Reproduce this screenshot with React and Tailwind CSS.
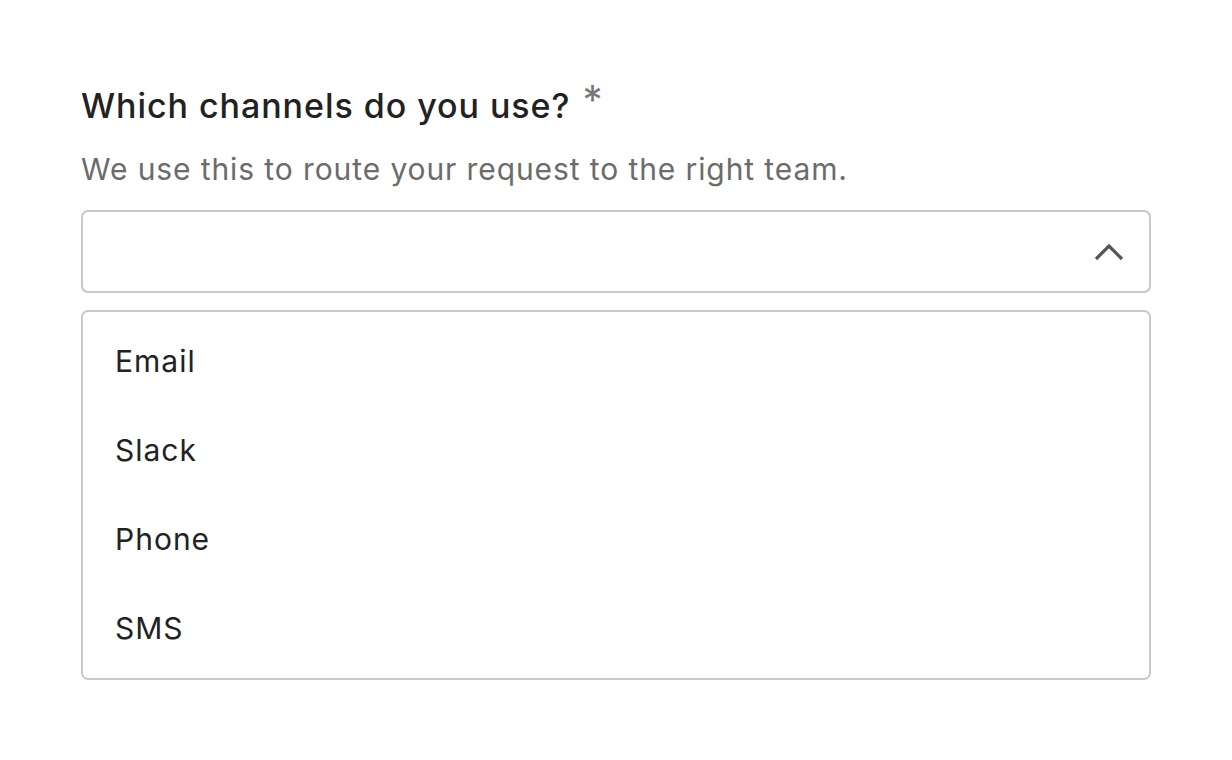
export default function App() {
  return (
    <div className="min-h-[760px] w-[1232px] bg-white" style={{ fontFamily: "Inter, 'Noto Sans', sans-serif" }}>
      <div className="pl-[81px] pr-[81px] pt-[82px]">
        <div className="flex items-start">
          <h2 className="text-[34px] leading-[48px] font-medium tracking-[0.95px] text-[#222222]">Which channels do you use?</h2>
          <span className="ml-[12px] mt-[-2px] text-[40px] leading-[40px] text-[#777777]">*</span>
        </div>
        <p className="mt-[19px] text-[30px] leading-[40px] tracking-[0.9px] text-[#6b6b6b]">We use this to route your request to the right team.</p>
        <div className="mt-[21px] flex h-[83px] items-center justify-end rounded-[7px] border-2 border-[#c8c8c8] pr-[25px]">
          <svg width="30" height="18" viewBox="0 0 30 18" fill="none">
            <path d="M2 16L15 3L28 16" stroke="#555555" strokeWidth="3.2" />
          </svg>
        </div>
        <div className="mt-[17px] flex flex-col rounded-[7px] border-2 border-[#c8c8c8] py-[5px]">
          {["Email", "Slack", "Phone", "SMS"].map((t) => (
            <div key={t} className="flex h-[89px] items-center px-[32px] text-[30px] tracking-[1px] text-[#222222]">
              {t}
            </div>
          ))}
        </div>
      </div>
    </div>
  );
}
